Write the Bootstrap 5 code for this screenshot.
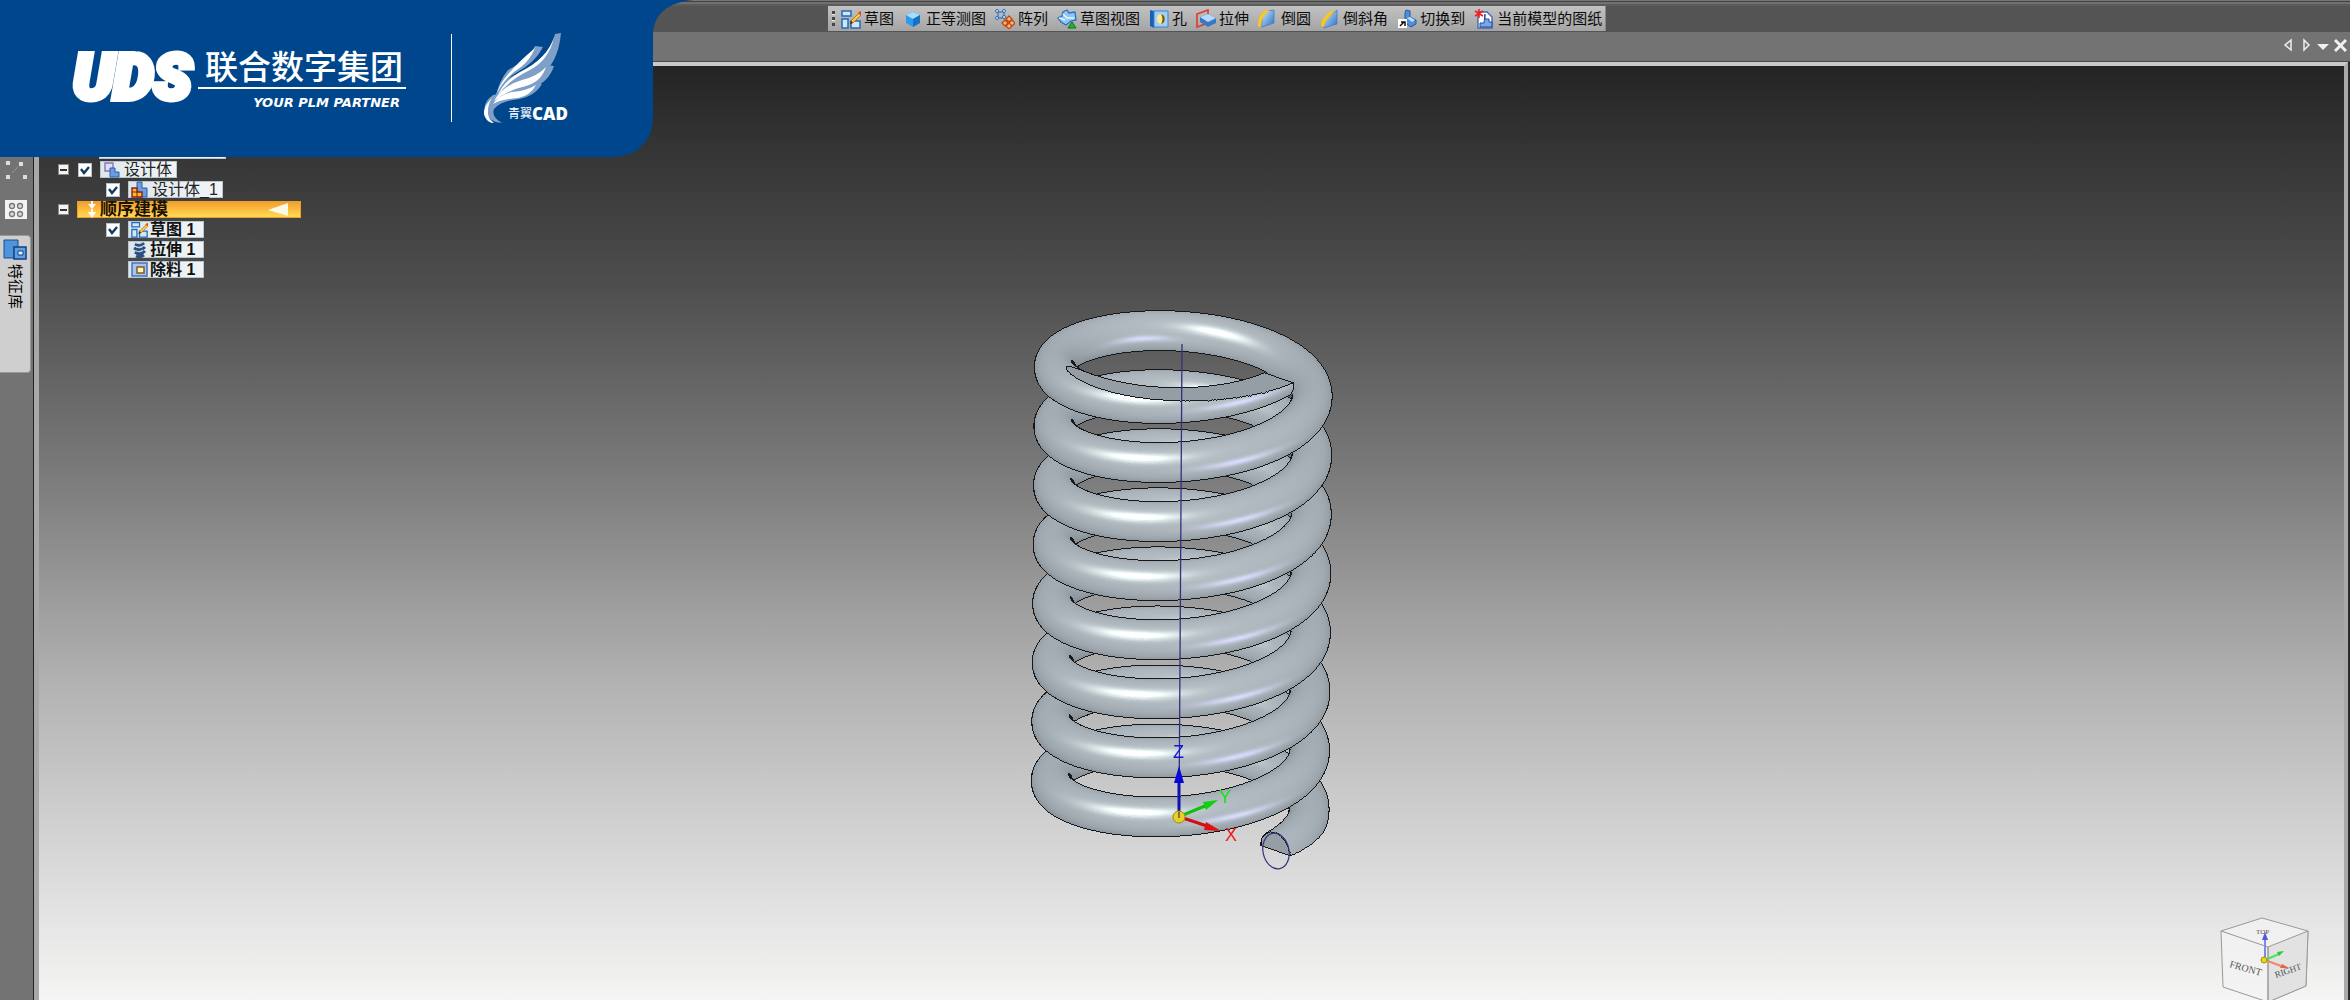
<!DOCTYPE html>
<html lang="zh-CN">
<head>
<meta charset="utf-8">
<meta name="viewport" content="width=device-width, initial-scale=1">
<title>青翼CAD</title>
<link href="https://cdn.jsdelivr.net/npm/bootstrap@5.3.0/dist/css/bootstrap.min.css" rel="stylesheet">
<style>
body{font-family:"Liberation Sans","Noto Sans CJK SC",sans-serif;background:#737373;color:#111;overflow:hidden}
.top-edge{height:6px;background:linear-gradient(#777 0 1px,#444 1px 2px,#707070 2px 4px,#5c5c5c 4px)}
.tool-strip{height:26px;background:#545454}
.tool-wrap{padding-left:828px}
.tool-group{height:25px;gap:9px;padding:0 3px 0 3px;background:linear-gradient(#c2c2c2,#a4a4a4);border-right:1px solid #888}
.tool-item{border:0;background:none;padding:0;gap:3px;font-size:15px;line-height:20px;color:#0b0b0b;white-space:nowrap}
.tool-item svg{width:20px;height:20px}
.grip{width:3px;height:15px;margin-left:1px;margin-right:-3px;background:repeating-linear-gradient(#444 0 3px,#eee 3px 4px,transparent 4px 6px)}
.tab-strip{height:30px;background:#737373;border-bottom:1px solid #4a4a4a;padding:0 3px 3px 0;gap:5px}
.tab-strip button{border:0;background:none;padding:0;line-height:0}
.rail{width:39px;background:#737373;border-right:5px solid #a8a8a8;box-shadow:inset -1px 0 #222;padding-top:98px}
.rail-tab{width:31px;height:138px;margin-top:15px;padding-top:3px;background:#cfcfcf;border:1px solid #999;border-left:0;border-radius:0 4px 4px 0;gap:3px}
.rail-tab span{writing-mode:vertical-rl;text-orientation:sideways;font-size:15px;line-height:20px;color:#000}
.scene{border-top:4px solid #cacaca;border-right:4px solid #a9a9a9;background:linear-gradient(#242424,#333 8%,#4f4f4f 24%,#808080 46%,#b2b2b2 66%,#dadada 86%,#f5f5f4)}
.scene-end{width:2px;background:#2c2c2c}
.model{width:364px;height:600px;margin-top:224px}
.tree{left:19px;top:75px;gap:3px;font-size:16px;line-height:17px;color:#222}
.tree-row{height:17px}
.node-box{height:17px;background:linear-gradient(90deg,#dde8ec,#f1f4f6);border:1px solid #b9c7cd;padding:0 4px 0 2px;gap:4px;white-space:nowrap}
.node-box svg{width:17px;height:17px;flex:none}
.node-root{width:127px;height:18px}
.node-strong{font-weight:700;color:#111;padding-right:8px;gap:2px}
.fold{width:11px;height:11px;border:1px solid #888;background:#f4f4ee;padding:0;display:flex;align-items:center;justify-content:center}
.fold::before{content:"";width:7px;height:2px;background:#333}
.tick{appearance:none;width:14px;height:14px;margin:0;border:1px solid #b8c4cc;background:#fff;flex:none}
.tick:checked{background:#fff url("data:image/svg+xml,%3Csvg xmlns='http://www.w3.org/2000/svg' viewBox='0 0 12 12'%3E%3Cpath d='M2 5l3 4 5-6' fill='none' stroke='%23123a63' stroke-width='2.4'/%3E%3C/svg%3E") center/12px no-repeat}
.ind-a{margin-left:9px}.ind-b{margin-left:48px}.ind-c{margin-left:70px}.ind-d{margin-left:41px}
.order-bar{width:224px;height:17px;background:linear-gradient(#f0a030,#fcb93c 45%,#ffdb58);border:1px solid #f0a028;font-weight:700;font-size:17px;line-height:15px;color:#1c1200;margin-left:8px;padding:0 12px 0 9px}
.order-bar .arrows{margin-right:3px}
.view-cube{right:30px;bottom:0}
.banner{left:0;top:0;width:700px;height:157px}
.brand{left:72px;top:30px}
.brand-mark{font:italic 900 63px/80px Roboto,sans-serif;color:#fff;-webkit-text-stroke:6px #fff;width:126px;padding-left:1px}
.brand-name{font-family:"Noto Sans CJK SC",sans-serif;font-size:33px;font-weight:500;line-height:38px;color:#fff;padding:0 3px 0 7px;margin-top:16px}
.brand-rule{height:2px;background:#fff;margin-top:3px}
.brand-line{font:italic 700 13px/16px "DejaVu Sans",sans-serif;color:#fff;margin-top:6px;padding-right:6px}
.brand-sep{left:451px;top:34px;width:1px;height:88px;background:#fff}
.wing{left:480px;top:30px}
.wing-name{left:508px;top:104px;font-size:12px;line-height:20px;color:#fff;white-space:nowrap}
.wing-name b{font:800 17px/20px "Open Sans",sans-serif}
</style>
</head>
<body>
<svg width="0" height="0" class="position-absolute"><defs>
<linearGradient id="gb" x1="0" y1="0" x2="1" y2="1"><stop offset="0" stop-color="#c8e8ff"/><stop offset="1" stop-color="#2f6fc0"/></linearGradient>
<symbol id="i-sketch" viewBox="0 0 20 20"><path d="M1 2h9v5H1zM1 10h6v9H1zM10 12h9v7h-9z" fill="#d4e6f4" stroke="#1f6bbd" stroke-width="1.5"/><path d="M9 15l2-4 7-7 2 2-7 7z" fill="#ffc93b" stroke="#a86b12" stroke-width=".8"/><path d="M17 4l2-2 2 2-2 2z" fill="#e2452e"/><path d="M9 15l1-3 2 2z" fill="#222"/></symbol>
<symbol id="i-solid" viewBox="0 0 17 17"><path d="M2 2h8v8H2z" fill="#e3dcf2" stroke="#8477b5" stroke-width="1.4"/><path d="M7 7h5v4h4v5H7z" fill="#6b9ddf" stroke="#2e5da8"/></symbol>
</defs></svg>

<div class="vh-100 d-flex flex-column position-relative">
  <header>
    <div class="top-edge"></div>
    <div class="tool-strip tool-wrap d-flex">
      <div class="tool-group d-flex align-items-center" role="toolbar" aria-label="快速工具">
        <span class="grip"></span>
        <button class="tool-item d-flex align-items-center"><svg><use href="#i-sketch"/></svg>草图</button>
        <button class="tool-item d-flex align-items-center"><svg viewBox="0 0 20 20"><path d="M10 3l7 3v8l-7 4-7-4V6z" fill="#2f9be8"/><path d="M10 3l7 3-7 4-7-4z" fill="#a5defc"/><path d="M10 10l7-4v8l-7 4z" fill="#1872c4"/></svg>正等测图</button>
        <button class="tool-item d-flex align-items-center"><svg viewBox="0 0 20 20"><g fill="#e4f0fa" stroke="#1f6bbd"><path d="M3 3h6v6H3z" fill="none"/><circle cx="2" cy="2" r="1.5"/><circle cx="9" cy="2" r="1.5"/><circle cx="2" cy="9" r="1.5"/><circle cx="9" cy="8" r="1.5"/></g><g fill="#ffb27a" stroke="#bd4a10" stroke-width="1.3"><path d="M14 7l3 3-3 3-3-3zM10 11l3 3-3 3-3-3zM17 11l3 3-3 3-3-3zM14 14l3 3-3 3-3-3z"/></g></svg>阵列</button>
        <button class="tool-item d-flex align-items-center"><svg viewBox="0 0 20 20"><path d="M6 3l4-2 2 3 6-1 1 8-5 1-5 4-5-3-3-4 4-2z" fill="#8fc6f4" stroke="#2a6fc4" stroke-width="1.3"/><path d="M6 5l4 4h7M2 9l6 2" stroke="#e8f6ff" fill="none" stroke-width="1.5"/><path d="M15 13l4 6h-8z" fill="#25b52a" stroke="#0d7413"/></svg>草图视图</button>
        <button class="tool-item d-flex align-items-center"><svg viewBox="0 0 20 20"><path d="M1 1l4 1v17l-4-2z" fill="#1b5db0"/><path d="M5 2h14v16H5z" fill="#9fd0f7" stroke="#3d82cf"/><ellipse cx="12" cy="10" rx="4" ry="5" fill="#ffe98a"/><path d="M12 5c5 1 5 9 0 10 2-3 2-7 0-10z" fill="#6a5410"/></svg>孔</button>
        <button class="tool-item d-flex align-items-center"><svg viewBox="0 0 20 20"><path d="M1 5l11-4v13L1 18z" fill="none" stroke="#e23a2e" stroke-width="1.6"/><path d="M4 8l8-3 8 4v5l-8 4-8-5z" fill="#3b78c4"/><path d="M4 8l8-3 8 4-8 4z" fill="#b4dbfb"/></svg>拉伸</button>
        <button class="tool-item d-flex align-items-center"><svg viewBox="0 0 20 20"><path d="M4 18V10Q5 3 10 2l6-1v13z" fill="url(#gb)" stroke="#3f7fc8" stroke-width=".8"/><path d="M0 18Q0 3 9 1l3 1Q4 5 3 17z" fill="#f9c623"/></svg>倒圆</button>
        <button class="tool-item d-flex align-items-center"><svg viewBox="0 0 20 20"><path d="M4 19l1-7 8-8 4-3v14z" fill="url(#gb)" stroke="#3f7fc8" stroke-width=".8"/><path d="M1 17l1-6L9 3l7-2-3 3-7 8-2 6z" fill="#f9c623"/></svg>倒斜角</button>
        <button class="tool-item d-flex align-items-center"><svg viewBox="0 0 20 20"><path d="M9 1l4 1v6l6 3v4l-5 3-6-4V4z" fill="#4f8fd8" stroke="#2559a2"/><path d="M10 9l3-1 5 3-3 2z" fill="#c0defa"/><path d="M1 10h9v9H1z" fill="#fff"/><path d="M3 17l4-4m-3 0h4v4" stroke="#111" stroke-width="1.5" fill="none"/></svg>切换到</button>
        <button class="tool-item d-flex align-items-center"><svg viewBox="0 0 20 20"><path d="M4 3h9l5 5v11H4z" fill="#fff" stroke="#4668b4" stroke-width="1.4"/><path d="M11 5v5h4v3h3v5H6v-4h4z" fill="#7aa8e4" stroke="#23489a"/><path d="M5 0v9M1 2l8 5M9 2L1 7" stroke="#f02020" stroke-width="1.6"/></svg>当前模型的图纸</button>
      </div>
    </div>
    <div class="tab-strip d-flex justify-content-end align-items-center">
      <button class="me-1" aria-label="上一个"><svg width="10" height="14"><path d="M8 2v10L2 7z" fill="#777" stroke="#eee" stroke-width="1.5"/></svg></button>
      <button aria-label="下一个"><svg width="10" height="14"><path d="M2 2v10l5-5z" fill="#777" stroke="#eee" stroke-width="1.5"/></svg></button>
      <button aria-label="列表"><svg width="12" height="14"><path d="M0 6h12l-6 6z" fill="#f0f0f0"/></svg></button>
      <button aria-label="关闭"><svg width="13" height="14"><path d="M1 2l11 11M12 2L1 13" stroke="#f0f0f0" stroke-width="3"/></svg></button>
    </div>
  </header>

  <div class="d-flex flex-grow-1">
    <nav class="rail flex-shrink-0" aria-label="侧栏">
      <svg class="d-block" width="34" height="60"><g fill="#ddd"><path d="M6 1h4v4H6zM19 2h4v4h-4zM6 15h4v4H6zM23 15h4v4h-4z"/></g><path d="M12 13l6-6" stroke="#999"/><path d="M5 40h22v19H5z" fill="#f2f2f2"/><g fill="#ddd" stroke="#777" stroke-width="1.3"><circle cx="12" cy="46" r="2.5"/><circle cx="20" cy="46" r="2.5"/><circle cx="12" cy="54" r="2.5"/><circle cx="20" cy="54" r="2.5"/></g></svg>
      <div class="rail-tab d-flex flex-column align-items-center">
        <svg width="24" height="22"><path d="M1 1h14v18H1z" fill="#4f93dc" stroke="#174f92"/><path d="M11 8h12v12H11z" fill="#5fa0e4" stroke="#123f7c" stroke-width="1.5"/><path d="M15 12h5v4h-5z" fill="#e8f2fa" stroke="#123f7c"/></svg>
        <span>特征库</span>
      </div>
    </nav>

    <main class="scene flex-grow-1 position-relative d-flex justify-content-center align-items-start">
      <div class="model position-relative flex-shrink-0">
        <canvas id="spring" class="position-absolute top-0 start-0" width="364" height="600"></canvas>
        <svg class="position-absolute top-0 start-0" width="364" height="600">
          <path d="M172 54L169 527" stroke="#34307c" stroke-width="1.3"/>
          <ellipse cx="266" cy="561" rx="13" ry="18" transform="rotate(-12 266 561)" fill="none" stroke="#34307c" stroke-width="1.2"/>
          <path d="M169 525v-42" stroke="#1010b4" stroke-width="3"/><path d="M169 476l5 17h-10z" fill="#0808d8"/>
          <path d="M173 525l22-9" stroke="#10c010" stroke-width="3"/><path d="M208 510l-15 2 3 8z" fill="#10d010"/>
          <path d="M173 528l24 8" stroke="#d01010" stroke-width="3"/><path d="M211 541l-15-9-2 8z" fill="#e01010"/>
          <circle cx="169" cy="527" r="6" fill="#e8cf2a" stroke="#a08a10"/><path d="M169 522v6" stroke="#222"/>
          <g font-family="Liberation Sans" font-size="18"><text x="163" y="468" fill="#1414e0">Z</text><text x="209" y="513" fill="#10e810">Y</text><text x="215" y="551" fill="#f01818">X</text></g>
        </svg>
      </div>

      <div class="tree position-absolute d-flex flex-column">
        <div class="tree-row d-flex"><span class="node-box node-root ind-d"></span></div>
        <div class="tree-row d-flex align-items-center"><button class="fold" aria-label="折叠"></button><input class="tick ind-a" type="checkbox" id="n1" checked><label for="n1" class="node-box d-flex align-items-center ms-2"><svg><use href="#i-solid"/></svg>设计体</label></div>
        <div class="tree-row d-flex align-items-center"><input class="tick ind-b" type="checkbox" id="n2" checked><label for="n2" class="node-box d-flex align-items-center ms-2"><svg viewBox="0 0 17 17"><path d="M6 1h5v6h5v9H6z" fill="#6b9ddf" stroke="#2e5da8"/><path d="M1 7h5v4h5v5H1z" fill="#f6bd2c" stroke="#8d1d12" stroke-width="1.4"/><path d="M1 11h5v5" fill="none" stroke="#8d1d12"/></svg>设计体_1</label></div>
        <div class="tree-row d-flex align-items-center"><button class="fold" aria-label="折叠"></button><div class="order-bar d-flex align-items-center"><svg width="10" height="17" class="arrows"><path d="M4 0h2v3h3L5 8 1 3h3zM4 8h2v3h3l-4 6-4-6h3z" fill="#fff"/></svg>顺序建模<svg width="20" height="13" class="ms-auto"><path d="M0 7L20 0v13z" fill="#fff8e4"/></svg></div></div>
        <div class="tree-row d-flex align-items-center"><input class="tick ind-b" type="checkbox" id="n3" checked><label for="n3" class="node-box node-strong d-flex align-items-center ms-2"><svg><use href="#i-sketch"/></svg>草图 1</label></div>
        <div class="tree-row d-flex align-items-center"><span class="node-box node-strong ind-c d-flex align-items-center"><svg viewBox="0 0 17 17"><path d="M4 3q5 3 9-1M3 7q6 4 11-1M4 11q5 4 10-1M5 15q4 2 8-1" stroke="#2c4f80" stroke-width="3" fill="none"/><path d="M5 2q4 2 7-1M5 6q4 2 7-1M5 10q4 2 7-1" stroke="#b8d0e8" stroke-width="1" fill="none"/></svg>拉伸 1</span></div>
        <div class="tree-row d-flex align-items-center"><span class="node-box node-strong ind-c d-flex align-items-center"><svg viewBox="0 0 17 17"><path d="M1 2h15v13H1z" fill="#a8c4f0" stroke="#4a6fc0" stroke-width="1.5"/><path d="M6 6h7v6H6z" fill="#fff6c0" stroke="#8a5a14" stroke-width="1.5"/></svg>除料 1</span></div>
      </div>

      <svg class="view-cube position-absolute" width="100" height="92" viewBox="2215 908 100 92">
        <path d="M2222 931l41-13 46 13-2 55-38 16-45-15z" fill="#f3f3f3" fill-opacity=".8" stroke="#999"/><path d="M2269 947l40-16-2 55-38 16z" fill="#e2e2e2" stroke="#999"/><path d="M2222 931l47 16v54" fill="none" stroke="#999"/>
        <g font-family="Liberation Serif" fill="#555"><text x="2230" y="967" font-size="10" transform="rotate(16 2230 967)">FRONT</text><text x="2277" y="978" font-size="9" transform="rotate(-19 2277 978)">RIGHT</text><text x="2257" y="934" font-size="7">TOP</text></g>
        <path d="M2266 960v-20" stroke="#8088e8" stroke-width="2"/><path d="M2266 932l3 8h-6z" fill="#5058e0"/><path d="M2266 960l14-6" stroke="#50e060" stroke-width="2"/><path d="M2285 951l-7 1 2 4z" fill="#20d030"/><path d="M2266 960l16 6" stroke="#f08868" stroke-width="2"/><path d="M2290 968l-7-4-2 4z" fill="#e86040"/><circle cx="2265" cy="960" r="3" fill="#e8d818" stroke="#a09010"/>
      </svg>
    </main>
    <div class="scene-end flex-shrink-0"></div>
  </div>

  <div class="banner position-absolute">
    <svg class="position-absolute top-0 start-0" width="700" height="157"><path d="M0 0H694C668 2 653 14 653 36V117C653 141 637 157 613 157H0z" fill="#00468c"/></svg>
    <div class="brand position-absolute d-flex">
      <div class="brand-mark mt-2">UDS</div>
      <div class="d-flex flex-column">
        <div class="brand-name">联合数字集团</div>
        <div class="brand-rule"></div>
        <div class="brand-line text-end">YOUR PLM PARTNER</div>
      </div>
    </div>
    <div class="brand-sep position-absolute"></div>
    <svg class="wing position-absolute" width="90" height="96" viewBox="12 0 90 96">
      <g fill="#7d9fc8"><path d="M93 3q-3 32-22 43-32 10-45 26 2-16 15-24Q80 32 87 4z"/><path d="M75 17q-7 15-27 26-15 9-20 25 2-16 12-28Q62 28 67 16z"/><path d="M86 36q-5 16-22 22-25 4-38 15 6-12 20-18Q72 46 79 35z"/><path d="M74 54q-8 14-29 16-13 2-19 9-3 8 8 14-14-1-17-12-2-9 8-16Q50 62 68 54z"/></g>
      <g fill="#fff"><path d="M67 18Q48 34 37 48q-6 8-8 15 8-16 24-26 9-7 14-19z"/><path d="M86 7q-5 24-26 34-20 10-30 24 6-14 22-23Q80 28 86 7z"/><path d="M78 37q-8 9-24 13-20 6-28 21 14-11 32-15 15-4 20-19z"/><path d="M68 55q-10 6-24 7-14 3-19 12 9-5 25-6 12-2 18-13z"/><path d="M24 68q-11 11-7 19 3 6 9 6-7-5-6-12 0-7 4-13z"/></g>
    </svg>
    <div class="wing-name position-absolute d-flex align-items-center">青翼<b>CAD</b></div>
  </div>
</div>

<script src="https://cdn.jsdelivr.net/npm/bootstrap@5.3.0/dist/js/bootstrap.bundle.min.js"></script>
<script>
// Orthographic z-buffered drawing of the coil: an eight-turn helix swept by a circular section.
(function () {
  const cv = document.getElementById('spring'), W = cv.width, H = cv.height, g = cv.getContext('2d');
  const R = 129, r = 20, s = 0.39, c = 0.92, pitch = 64.2, cx = 173, y0 = 47;
  const from = 42, to = 8 * 360 + 42, D = Math.PI / 180;
  const hTop = -pitch * from / 360, hEnd = -pitch * to / 360;
  const z = new Float32Array(W * H).fill(-1e4), N = new Float32Array(W * H * 3), kind = new Uint8Array(W * H);
  // q: distance from the axis, h: height, nr/nu: radial and upward normal, k: 0 skin, 1 top cut, 2 end cut
  function plot(ca, sa, q, h, nr, nu, k) {
    const Z = q * sa, y = y0 + Z * s - h * c;
    const x = cx + q * ca - 3.5 * (y - 54) / 473, d = Z * c + h * s;
    const i = Math.round(y) * W + Math.round(x);
    if (d > z[i]) {
      z[i] = d; kind[i] = k;
      N[3 * i] = nr * ca; N[3 * i + 1] = nr * sa * s - nu * c; N[3 * i + 2] = nr * sa * c + nu * s;
    }
  }
  for (let a = from; a <= to; a += 0.2) {
    const ca = Math.cos(a * D), sa = Math.sin(a * D), h0 = -pitch * a / 360;
    for (let b = 0; b < 360; b++) {
      const cb = Math.cos(b * D), sb = Math.sin(b * D), h = h0 + r * sb;
      if (h <= hTop && h >= hEnd) plot(ca, sa, R + r * cb, h, cb, sb, 0);
    }
    const t = hTop - h0;
    if (t < r) { const w = Math.sqrt(r * r - t * t); for (let u = -w; u <= w; u += 0.4) plot(ca, sa, R + u, hTop, 0, 1, 1); }
  }
  const ce = Math.cos(to * D), se = Math.sin(to * D);
  for (let u = -r; u <= r; u += 0.3) for (let v = 0; v * v <= r * r - u * u; v += 0.3) plot(ce, se, R + u, hEnd + v, 0, 1, 2);

  // Highlights are stretched along the tube: wide in x, narrow across.
  function spot(i, x, y, tilt, wide, tight) {
    const dx = N[3 * i] - x, dy = N[3 * i + 1] - y;
    const p = dx * Math.cos(tilt) - dy * Math.sin(tilt), q = dx * Math.sin(tilt) + dy * Math.cos(tilt);
    return Math.exp(-p * p * wide - q * q * tight);
  }
  const img = g.createImageData(W, H);
  for (let y = 1; y < H - 1; y++) for (let x = 1; x < W - 1; x++) {
    const i = y * W + x; if (z[i] < -9e3) continue;
    let edge = false;
    for (const j of [i - 1, i + 1, i - W, i + W]) {
      if (z[i] - z[j] > 9) edge = true;
      else if (kind[i] > kind[j] && z[j] > -9e3 && z[j] - z[i] < 9) edge = true;
    }
    let v;
    if (edge) v = [22, 24, 28];
    else if (kind[i]) v = [150, 158, 165];
    else {
      const n = Math.max(0, N[3 * i + 2]), up = -N[3 * i + 1];
      const base = 118 + 60 * Math.sqrt(n) + 8 * up;
      const w = 95 * spot(i, -0.26, -0.2, 0, 14, 22), u = 50 * spot(i, 0.38, 0.34, 0.3, 14, 45);
      v = [base + w + u * 0.9, base + 9 + w + u * 0.8, base + 15 + w * 0.9 + u * 1.3];
    }
    img.data[4 * i] = v[0]; img.data[4 * i + 1] = v[1]; img.data[4 * i + 2] = v[2]; img.data[4 * i + 3] = 255;
  }
  g.putImageData(img, 0, 0);
})();
</script>
</body>
</html>
